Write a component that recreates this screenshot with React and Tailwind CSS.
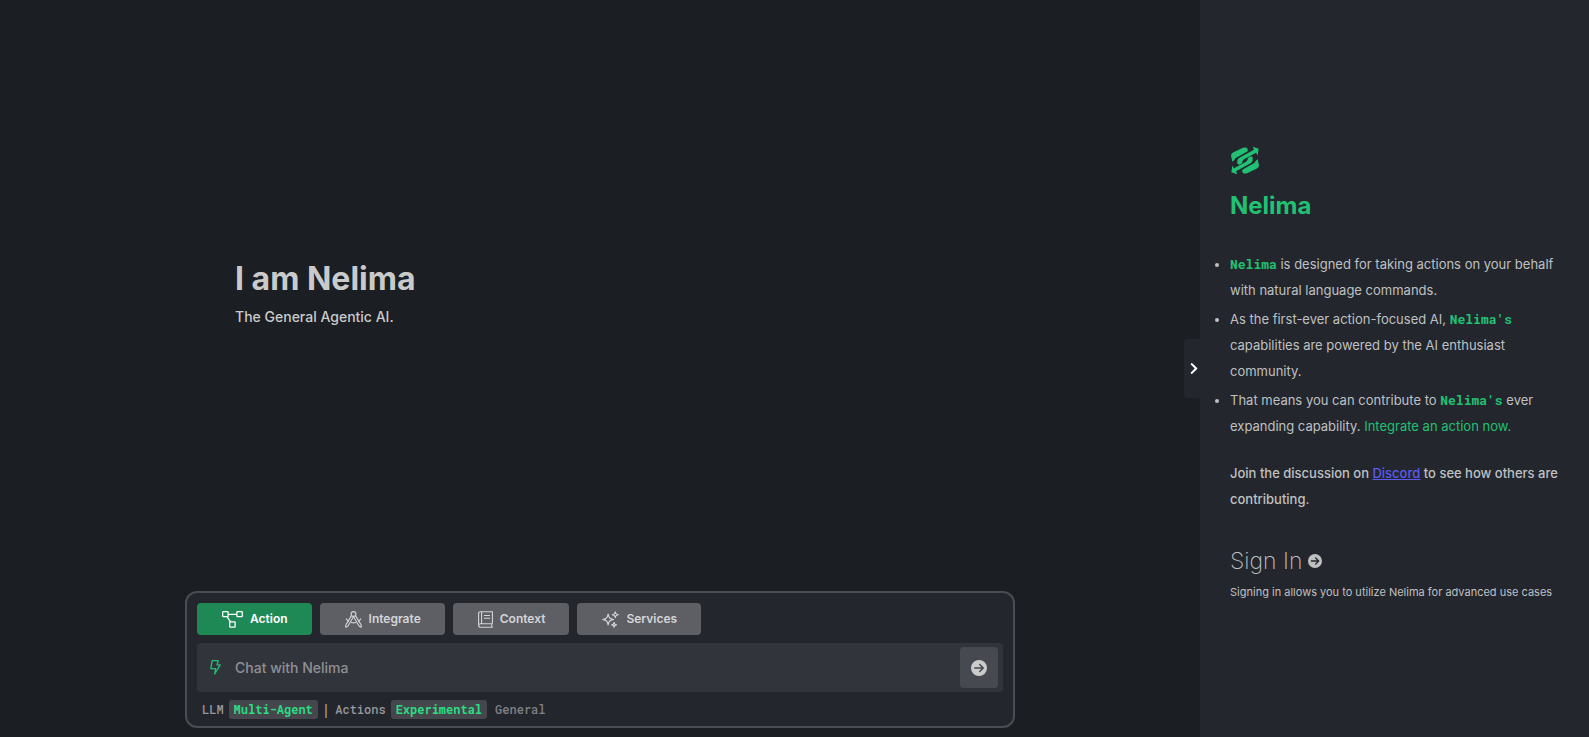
import { FaCircleArrowRight } from "react-icons/fa6";
import { FaChevronRight } from "react-icons/fa";
import { HiOutlineSparkles } from "react-icons/hi2";

const MONO = "font-['Roboto_Mono','DejaVu_Sans_Mono',monospace]";

function LogoHalf() {
  return (
    <>
      <path d="M0 28Q1 22 6 19L36 5Q46 2 50 8V15L13 36Q11 43 4 47Z" />
      <path d="M19 53V44Q19 39 25 35L69 11L65 2L83 8L80 27L75 20L39 39Q33 43 33 51L24 56Z" />
    </>
  );
}

function Logo() {
  return (
    <svg viewBox="0 0 84 86" className="ml-px h-[29px] w-[28px] fill-[#21c073]" aria-hidden="true">
      <LogoHalf />
      <g transform="rotate(180 42 43)">
        <LogoHalf />
      </g>
    </svg>
  );
}

function DiagramIcon() {
  return (
    <svg viewBox="0 0 21 17" className="h-[17px] w-[21px] fill-none stroke-current stroke-[1.3]" aria-hidden="true">
      <rect x="0.7" y="0.7" width="5.400" height="5" rx="0.6" />
      <rect x="14.900" y="0.7" width="5.400" height="5" rx="0.6" />
      <rect x="7.700" y="10.900" width="5.400" height="5.200" rx="0.6" />
      <path d="M6.100 3.300H14.900M5 5.700L8.500 10.900" />
    </svg>
  );
}

function CompassIcon() {
  return (
    <svg viewBox="0 0 17 17" className="size-[17px] fill-none stroke-current stroke-[1.1]" strokeLinejoin="round" aria-hidden="true">
      <circle cx="8.500" cy="3" r="2.400" />
      <path d="M6.500 4.600L0.800 14V16.200L2.800 15.200L8.500 5.800L14.200 15.200L16.200 16.200V14L10.500 4.600" />
      <path d="M1 7.500C2.100 9.300 3 10 4 10.600M6 11.500C7.700 12 9.300 12 11 11.500M13 10.600C14 10 14.900 9.300 16 7.500" />
    </svg>
  );
}

function BookIcon() {
  return (
    <svg viewBox="0 0 15 17" className="h-[17px] w-[15px] fill-none stroke-current stroke-[1.1]" aria-hidden="true">
      <path d="M14.400 12.700V0.700H2.600Q0.600 0.700 0.600 2.700V14.300Q0.600 16.300 2.600 16.300H14.800M14.400 12.700H2.600Q0.600 12.700 0.600 14.500M13.800 12.700V16.300M3.600 0.700V12.700M6 4.500H12M6 7.200H12" />
    </svg>
  );
}

function SparklesIcon() {
  return <HiOutlineSparkles className="-mx-px size-[19px]" aria-hidden="true" />;
}

function BoltIcon() {
  return (
    <svg viewBox="0 0 11 15" className="h-[15px] w-[11px] fill-none stroke-[#21c073] stroke-[1.3]" strokeLinejoin="round" aria-hidden="true">
      <path d="M2.200 0.700H8.200L7 4.900H10.200L4.700 14L5.600 8.600H0.800Z" />
    </svg>
  );
}

const MODES = [
  { label: "Action", Icon: DiagramIcon, active: true },
  { label: "Integrate", Icon: CompassIcon },
  { label: "Context", Icon: BookIcon },
  { label: "Services", Icon: SparklesIcon },
];

function Modes() {
  return (
    <div className="flex gap-2">
      {MODES.map(({ label, Icon, active }) => (
        <button
          key={label}
          type="button"
          className={
            "flex h-8 items-center gap-[7px] rounded pr-6 pl-[25px] text-xs font-semibold " +
            (active ? "bg-[#1e8955] text-white" : "bg-[#5e5f64] text-[#d4d5d8]")
          }
        >
          <Icon />
          {label}
        </button>
      ))}
    </div>
  );
}

function Tag({ children }) {
  return (
    <span className="ml-[5px] rounded-[3px] bg-[#46474c] px-[5px] leading-[19px] font-bold text-[#2bdc83]">{children}</span>
  );
}

function Composer() {
  return (
    <form className="mx-auto mb-[9px] flex w-[830px] max-w-full flex-col gap-2 rounded-[12px] border-2 border-[#4a4c56] bg-[#24262d] px-[10px] pt-[10px] pb-[7px]">
      <Modes />
      <div className="flex items-center rounded bg-[#32343c] py-1 pr-[5px] pl-[13px]">
        <BoltIcon />
        <input
          aria-label="Chat with Nelima"
          placeholder="Chat with Nelima"
          className="ml-[14px] min-w-0 flex-1 bg-transparent text-sm font-medium text-[#d1d1d1] outline-none placeholder:text-[#8f9093]"
        />
        <button type="button" aria-label="Send" className="flex h-[41px] w-[38px] items-center justify-center rounded bg-[#474950] text-[#cbcbcb]">
          <FaCircleArrowRight className="size-4" aria-hidden="true" />
        </button>
      </div>
      <div className={`flex h-[19px] items-center pl-[5px] text-xs leading-[19px] font-medium text-[#97989b] ${MONO}`}>
        <span>LLM</span>
        <Tag>Multi-Agent</Tag>
        <span className="ml-1 text-sm leading-[19px] text-[#b0b0b0]">|</span>
        <span className="ml-[5px]">Actions</span>
        <Tag>Experimental</Tag>
        <span className="ml-2 text-[#808184]">General</span>
      </div>
    </form>
  );
}

function Name({ children }) {
  return <span className={`font-bold text-[#21c073] ${MONO}`}>{children}</span>;
}

function Sidebar() {
  return (
    <aside className="relative flex w-[389px] shrink-0 flex-col justify-center bg-[#24262d] px-[30px] pt-[14px] text-[13px] leading-[26px] text-[#bfc0c2]">
      <button type="button" aria-label="Collapse panel" className="absolute top-[339px] -left-4 flex h-[59px] w-4 items-center justify-center rounded-l bg-[#24262d] pl-1 text-white">
        <FaChevronRight className="size-[13px]" aria-hidden="true" />
      </button>
      <Logo />
      <h2 className="mt-[13px] text-2xl leading-9 font-bold text-[#21c073]">Nelima</h2>
      <ul className="mt-[27px] flex list-disc flex-col gap-[3px]">
        <li><Name>Nelima</Name> is designed for taking actions on your behalf with natural language commands.</li>
        <li>As the first-ever action-focused AI, <Name>Nelima's</Name> capabilities are powered by the AI enthusiast community.</li>
        <li>That means you can contribute to <Name>Nelima's</Name> ever expanding capability. <a href="#integrate" className="text-[#21c073]">Integrate an action now.</a></li>
      </ul>
      <p className="mt-[21px] font-medium">
        Join the discussion on <a href="#discord" className="text-[#5b5bf0] underline">Discord</a> to see how others are contributing.
      </p>
      <a href="#sign-in" className="mt-[31px] flex items-center gap-[6px] text-[23px] leading-9 font-extralight">
        Sign In <FaCircleArrowRight className="size-[14px]" aria-hidden="true" />
      </a>
      <p className="text-[11px]">Signing in allows you to utilize Nelima for advanced use cases</p>
    </aside>
  );
}

export default function App() {
  return (
    <div className="flex min-h-screen bg-[#1b1e22] font-['Inter',sans-serif]">
      <main className="flex flex-1 flex-col">
        <header className="flex flex-1 flex-col justify-center pb-[6px] pl-[235px] text-[#cacaca]">
          <h1 className="text-[32px] leading-[48px] font-bold">I am Nelima</h1>
          <p className="text-sm leading-7 font-medium">The General Agentic AI.</p>
        </header>
        <Composer />
      </main>
      <Sidebar />
    </div>
  );
}
